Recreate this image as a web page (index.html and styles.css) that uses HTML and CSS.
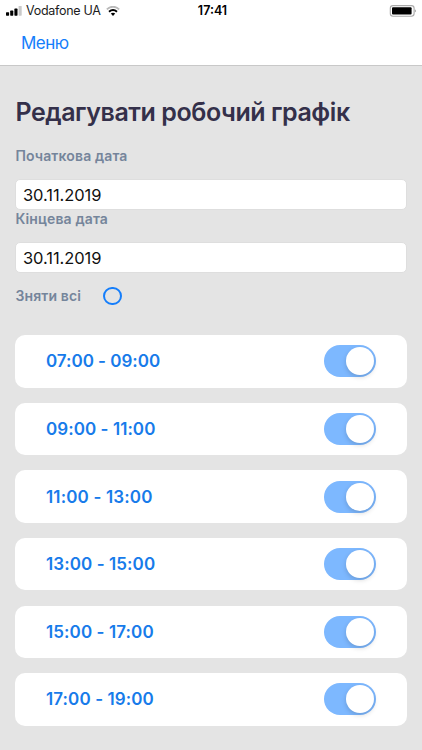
FILE: index.html
```html
<!DOCTYPE html>
<html lang="uk">
<head>
<meta charset="utf-8">
<title>Редагувати робочий графік</title>
<link rel="stylesheet" href="styles.css">
</head>
<body>
<header class="top">
  <div class="status">
    <div class="carrier">
      <svg class="signal" width="16" height="10" viewBox="0 0 16 10"><rect x="0" y="6.2" width="3.1" height="3.5" rx=".6"/><rect x="4.2" y="4.6" width="3.1" height="5.1" rx=".6"/><rect x="8.4" y="2.6" width="3.1" height="7.1" rx=".6"/><rect x="12.6" y="0" width="3.1" height="9.7" rx=".6" fill="#c9c9c9"/></svg>
      <span class="operator">Vodafone UA</span>
      <svg class="wifi" width="14" height="10" viewBox="0 0 14 10" fill="none"><path d="M.8 3.4Q7-2 13.2 3.4" stroke="#b9b9b9" stroke-width="1.8"/><path d="M3 5.7Q7 2.2 11 5.7" stroke="#000" stroke-width="1.9"/><path d="M4.8 7.5Q7 5.8 9.2 7.5L7 9.9Z" fill="#000"/></svg>
    </div>
    <span class="clock">17:41</span>
    <svg class="battery" width="28" height="12" viewBox="0 0 28 12"><rect x="1.3" y=".6" width="23.8" height="10.6" rx="2.7" fill="#fff" stroke="#aaa" stroke-width="1.1"/><rect x="3" y="2.2" width="19.6" height="7.4" rx="1" fill="#000"/><path d="M25.8 4.2Q28.4 5.9 25.8 7.6Z" fill="#aaa"/></svg>
  </div>
  <nav class="nav"><a class="menu">Меню</a></nav>
</header>
<main class="page">
  <h1 class="title">Редагувати робочий графік</h1>
  <label class="label start">Початкова дата</label>
  <div class="field">30.11.2019</div>
  <label class="label end">Кінцева дата</label>
  <div class="field">30.11.2019</div>
  <div class="clear"><span class="label">Зняти всі</span><span class="radio"></span></div>
  <div class="slots">
    <div class="slot"><span class="time t1">07:00 - 09:00</span><span class="switch"></span></div>
    <div class="slot"><span class="time t2">09:00 - 11:00</span><span class="switch"></span></div>
    <div class="slot"><span class="time t3">11:00 - 13:00</span><span class="switch"></span></div>
    <div class="slot"><span class="time t4">13:00 - 15:00</span><span class="switch"></span></div>
    <div class="slot"><span class="time t5">15:00 - 17:00</span><span class="switch"></span></div>
    <div class="slot"><span class="time t6">17:00 - 19:00</span><span class="switch"></span></div>
  </div>
</main>
</body>
</html>
```
FILE: styles.css
```css
* { box-sizing: border-box; }
body {
  margin: 0;
  height: 750px;
  overflow: hidden;
  background: #e4e4e4;
  font-family: Inter, "Liberation Sans", sans-serif;
}
.top { height: 66px; background: #fff; border-bottom: 1px solid #c8c8c8; }
.status {
  display: grid;
  grid-template-columns: 1fr auto 1fr;
  align-items: center;
  height: 22px;
  padding: 0 5px 0 6px;
}
.carrier { display: flex; align-items: center; color: #1c1c1c; font-size: 12.5px; line-height: 22px; }
.operator { margin: 0 5.5px 0 4px; white-space: nowrap; letter-spacing: -0.28px; }
.clock { padding-left: 2px; font-size: 12.5px; font-weight: 600; line-height: 22px; }
.battery { justify-self: end; margin-top: -1px; }
.nav { padding-left: 21px; line-height: 43px; }
.menu { color: #157efb; font-size: 17px; letter-spacing: -0.5px; }
.page { padding: 30px 15.4px 0; }
.title { margin: 0; color: #34304a; font-size: 25px; font-weight: 600; line-height: 32px; letter-spacing: -0.43px; white-space: nowrap; }
.label { display: block; color: #75859b; font-size: 14px; font-weight: 600; line-height: 18px; letter-spacing: 0.13px; }
.start { margin: 19px 0 14.4px; }
.end { margin: 0 0 14px; }
.field {
  height: 31px;
  padding: 0 6.6px;
  border: 1px solid #dedede;
  border-radius: 5px;
  background: #fff;
  color: #111;
  font-size: 16.5px;
  line-height: 31px;
  letter-spacing: -0.08px;
}
.clear { display: flex; align-items: center; gap: 22px; height: 19px; margin-top: 13px; }
.radio { width: 18.5px; height: 18.5px; border: 2px solid #157efb; border-radius: 50%; }
.slots { display: grid; gap: 15.3px; margin-top: 29.9px; }
.slot {
  display: flex;
  align-items: center;
  justify-content: space-between;
  height: 52.3px;
  padding: 0 30.6px;
  border-radius: 10px;
  background: #fff;
}
.time { color: #177bea; font-size: 17px; font-weight: 600; }
.t1 { letter-spacing: -0.02px; }
.t2 { letter-spacing: 0.06px; }
.t3 { letter-spacing: 0.15px; }
.t4 { letter-spacing: 0.09px; }
.t5, .t6 { letter-spacing: 0.1px; }
.switch { width: 52.5px; height: 32px; padding: 2px; border-radius: 16px; background: #7db8ff; }
.switch::before {
  content: "";
  display: block;
  width: 28px;
  height: 28px;
  margin-left: auto;
  border-radius: 50%;
  background: #fff;
  box-shadow: 0 2px 5px rgba(0, 0, 0, 0.16);
}
```
